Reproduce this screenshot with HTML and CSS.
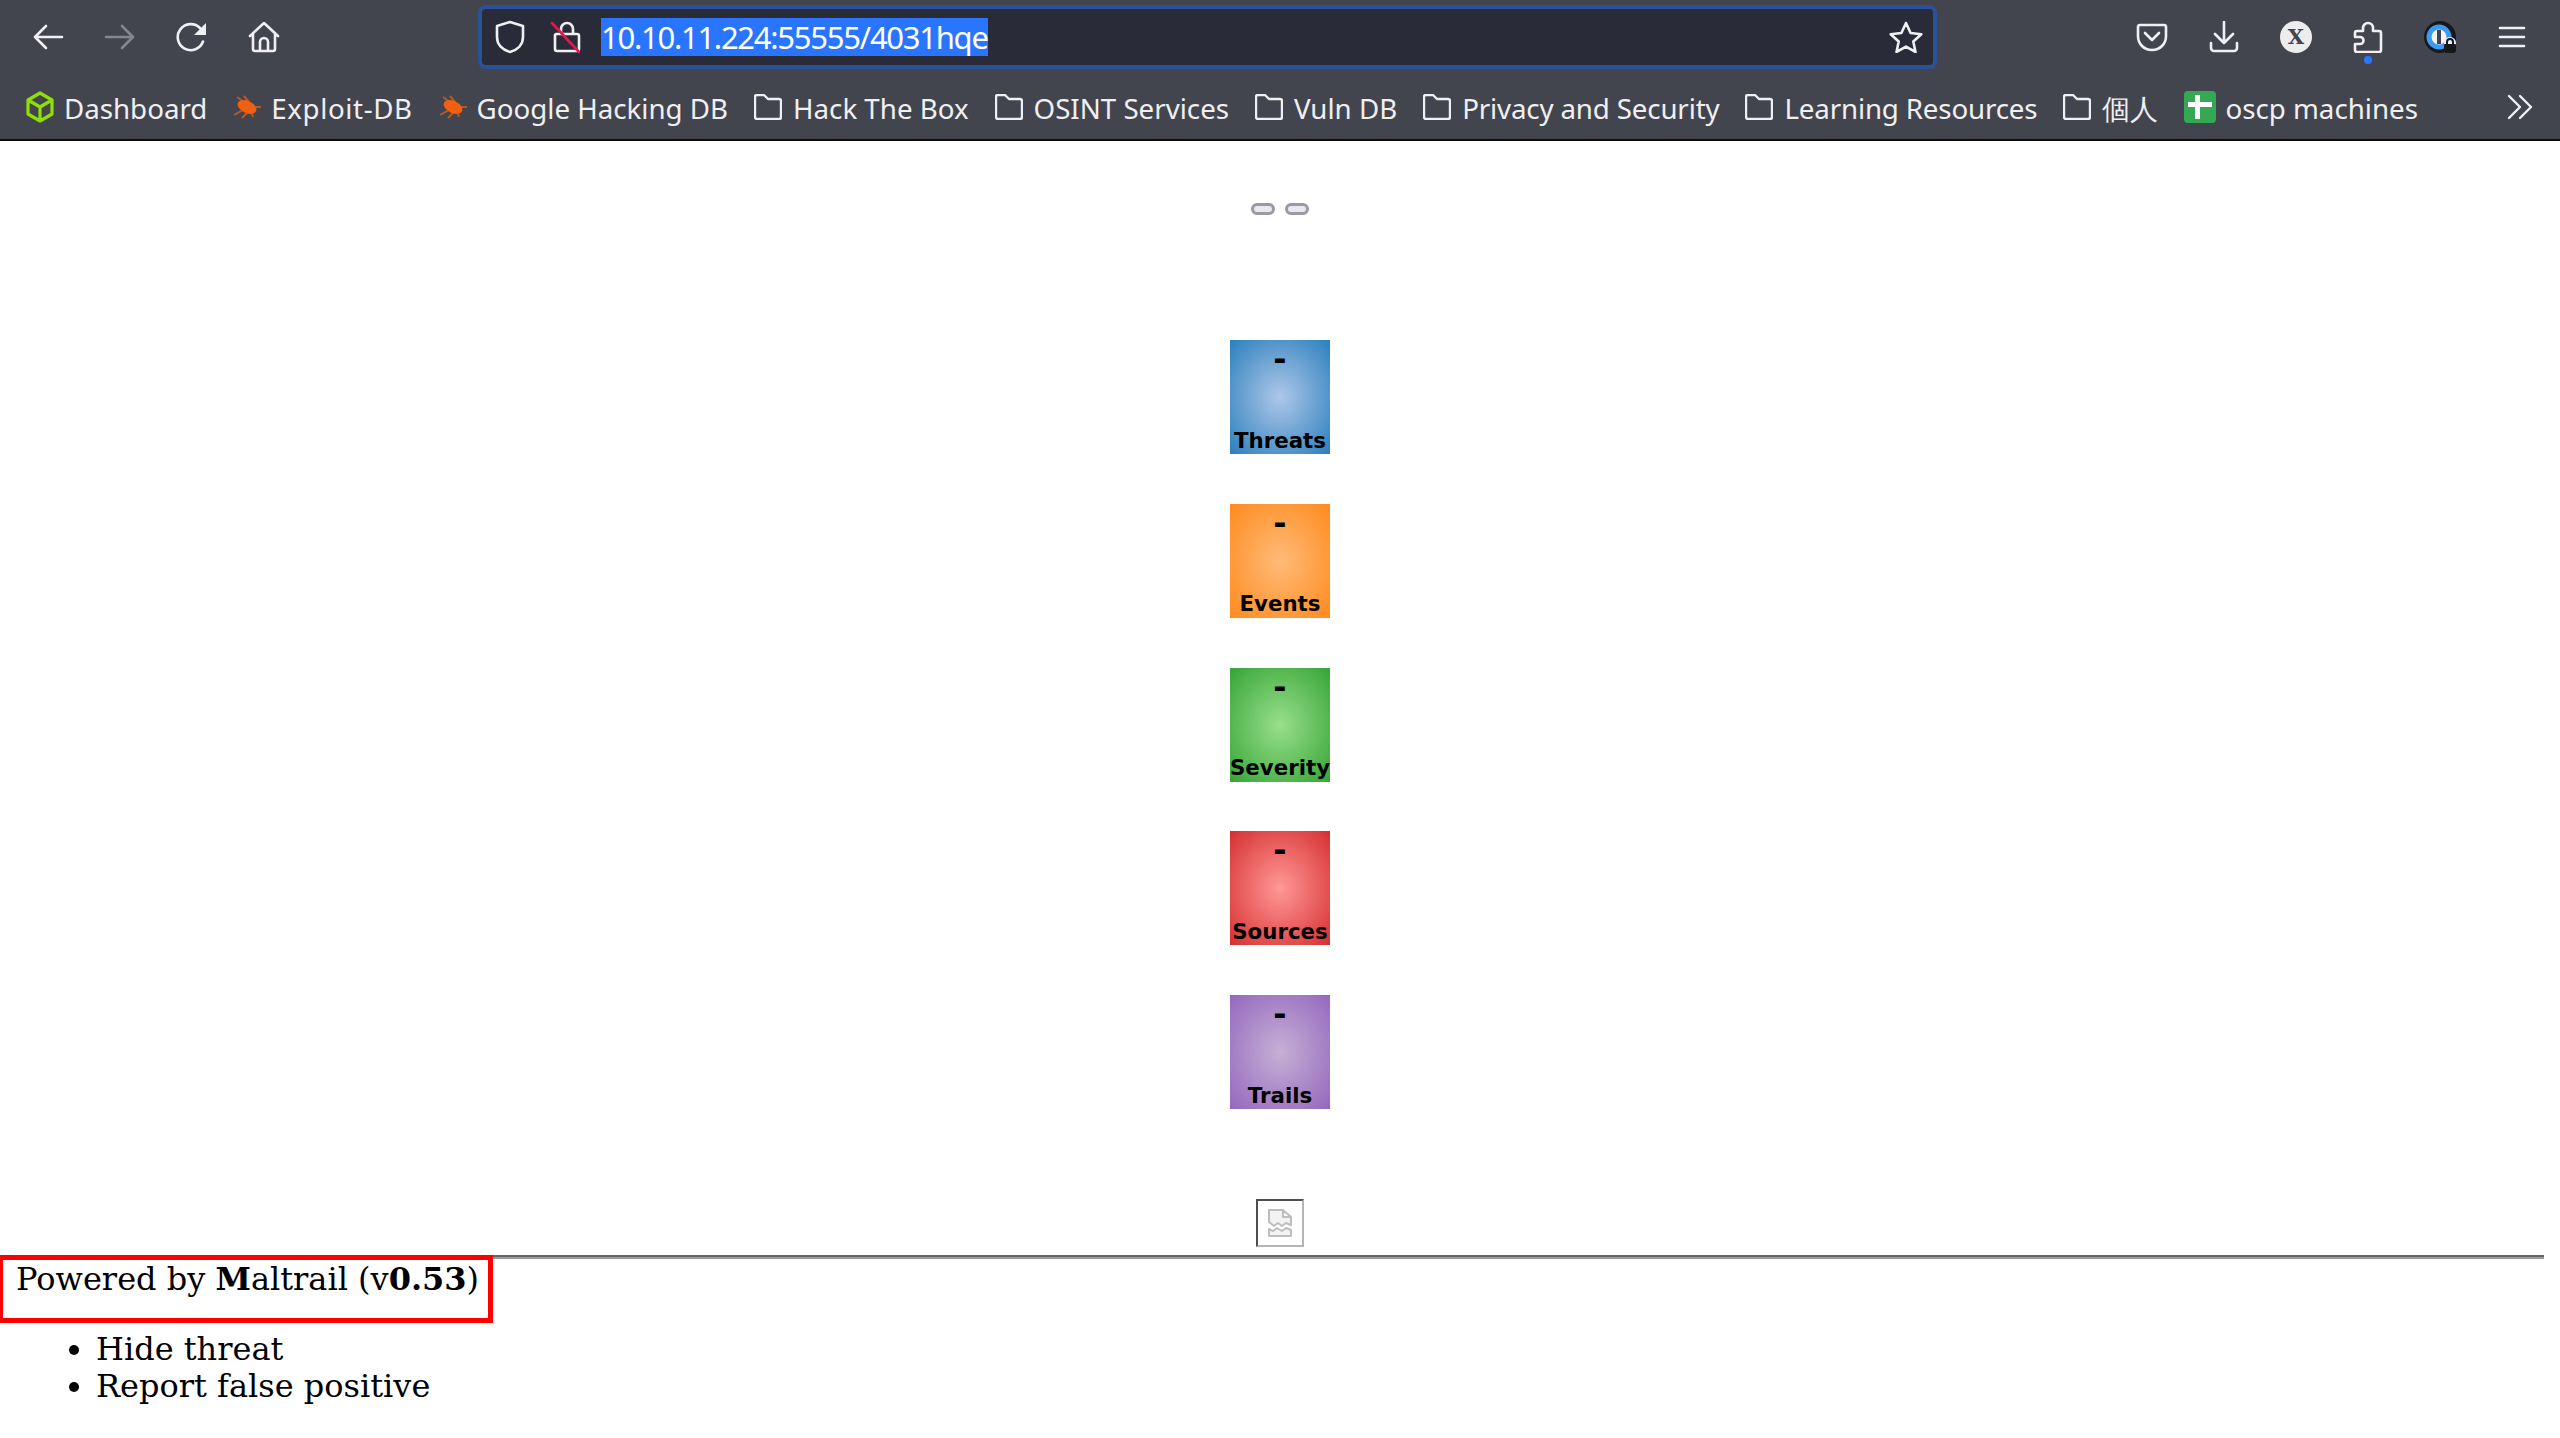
FILE: index.html
```html
<!DOCTYPE html>
<html lang="en">
<head>
<meta charset="utf-8">
<title>Maltrail</title>
<link rel="stylesheet" href="styles.css">
</head>
<body>
<header class="chrome">
  <div class="navrow">
    <div class="btn"><svg class="ic" viewBox="0 0 32 32"><path d="M30 16H3M14 5 3 16l11 11"/></svg></div>
    <div class="btn dim"><svg class="ic" viewBox="0 0 32 32"><path d="M2 16h27M18 5l11 11-11 11"/></svg></div>
    <div class="btn"><svg class="ic" viewBox="0 0 32 32"><path d="M27 20.5A13 13 0 1 1 24 7"/><path class="fill" d="M30 2v12H18z"/></svg></div>
    <div class="btn"><svg class="ic" viewBox="0 0 32 32"><path d="M2 15 16 2l14 13M5 13v15a2 2 0 0 0 2 2h18a2 2 0 0 0 2-2V13M12 30v-9a4 4 0 0 1 8 0v9"/></svg></div>
    <div class="urlbar">
      <svg class="ic shield" viewBox="0 0 32 34"><path d="M16 2 3 6v11c0 8 6 13 13 15 7-2 13-7 13-15V6z"/></svg>
      <svg class="ic lock" viewBox="0 0 32 34"><path d="M11 14V9a6 6 0 0 1 12 0v5M6 14h21a2 2 0 0 1 2 2v13a2 2 0 0 1-2 2H7a2 2 0 0 1-2-2V15z"/><path class="slash" d="M2 3l27 29"/></svg>
      <span class="url">10.10.11.224:55555/4031hqe</span>
      <svg class="ic star" viewBox="0 0 34 32"><path d="M17 2l4.6 10 10.7 1.2-8 7.3 2.2 10.5L17 25.6 7.500 31l2.200-10.500-8-7.300L12.400 12z"/></svg>
    </div>
    <div class="btn pushed"><svg class="ic" viewBox="0 0 32 32"><path d="M4 4h24a2 2 0 0 1 2 2v9c0 8-6 14-14 14S2 23 2 15V6a2 2 0 0 1 2-2z"/><path d="M9 12l7 7 7-7"/></svg></div>
    <div class="btn"><svg class="ic" viewBox="0 0 32 32"><path d="M16 1v21M7 13l9 9 9-9M3 22v5a3 3 0 0 0 3 3h20a3 3 0 0 0 3-3v-5"/></svg></div>
    <div class="btn"><span class="xbadge">X</span></div>
    <div class="btn puzzle"><svg class="ic" viewBox="0 0 32 32"><path d="M5 10h6V7a5 5 0 0 1 10 0v3h6a2 2 0 0 1 2 2v17a2 2 0 0 1-2 2H5a2 2 0 0 1-2-2v-6h5a3.500 3.500 0 0 0 0-7H3v-4a2 2 0 0 1 2-2z"/></svg><span class="dot"></span></div>
    <div class="btn"><svg class="op" viewBox="0 0 32 32"><circle class="op-b" cx="16" cy="16" r="16"/><circle class="op-r" cx="15" cy="16" r="10"/><rect class="op-k" x="13" y="9" width="4" height="14"/><path class="op-w" d="M20 32V22a6 6 0 0 1 12 0v10z"/><rect class="op-b" x="20" y="23" width="12" height="9" rx="1"/><path class="op-l" d="M23 24v-3a3 3 0 0 1 6 0v3"/></svg></div>
    <div class="btn"><svg class="ic" viewBox="0 0 32 32"><path d="M4 7h24M4 16h24M4 25h24"/></svg></div>
  </div>
  <nav class="bookmarks">
    <a class="bm bm-cube"><svg class="cube" viewBox="0 0 28 32"><path d="M14 2 26 9v14l-12 7-12-7V9zM2 9l12 7 12-7M14 16v14"/></svg><span>Dashboard</span></a>
    <a class="bm bm-bug bm-wide"><svg class="bug" viewBox="0 0 30 24"><path class="legs" d="M4 2l7 5M11 1l5 6M1 20l9-5M9 23l6-6M20 22l-2-6M28 12h-7"/><ellipse class="body" cx="14" cy="12" rx="10" ry="6" transform="rotate(25 14 12)"/></svg><span>Exploit-DB</span></a>
    <a class="bm bm-bug"><svg class="bug" viewBox="0 0 30 24"><path class="legs" d="M4 2l7 5M11 1l5 6M1 20l9-5M9 23l6-6M20 22l-2-6M28 12h-7"/><ellipse class="body" cx="14" cy="12" rx="10" ry="6" transform="rotate(25 14 12)"/></svg><span>Google Hacking DB</span></a>
    <a class="bm"><svg class="folder" viewBox="0 0 28 26"><path d="M3 1h7l4 4h11a2 2 0 0 1 2 2v16a2 2 0 0 1-2 2H3a2 2 0 0 1-2-2V3a2 2 0 0 1 2-2z"/></svg><span>Hack The Box</span></a>
    <a class="bm"><svg class="folder" viewBox="0 0 28 26"><path d="M3 1h7l4 4h11a2 2 0 0 1 2 2v16a2 2 0 0 1-2 2H3a2 2 0 0 1-2-2V3a2 2 0 0 1 2-2z"/></svg><span>OSINT Services</span></a>
    <a class="bm"><svg class="folder" viewBox="0 0 28 26"><path d="M3 1h7l4 4h11a2 2 0 0 1 2 2v16a2 2 0 0 1-2 2H3a2 2 0 0 1-2-2V3a2 2 0 0 1 2-2z"/></svg><span>Vuln DB</span></a>
    <a class="bm bm-narrow"><svg class="folder" viewBox="0 0 28 26"><path d="M3 1h7l4 4h11a2 2 0 0 1 2 2v16a2 2 0 0 1-2 2H3a2 2 0 0 1-2-2V3a2 2 0 0 1 2-2z"/></svg><span>Privacy and Security</span></a>
    <a class="bm bm-narrow"><svg class="folder" viewBox="0 0 28 26"><path d="M3 1h7l4 4h11a2 2 0 0 1 2 2v16a2 2 0 0 1-2 2H3a2 2 0 0 1-2-2V3a2 2 0 0 1 2-2z"/></svg><span>Learning Resources</span></a>
    <a class="bm"><svg class="folder" viewBox="0 0 28 26"><path d="M3 1h7l4 4h11a2 2 0 0 1 2 2v16a2 2 0 0 1-2 2H3a2 2 0 0 1-2-2V3a2 2 0 0 1 2-2z"/></svg><span>個人</span></a>
    <a class="bm bm-tight"><svg class="plus" viewBox="0 0 32 32"><rect class="plus-bg" width="32" height="32" rx="4"/><path class="plus-w" d="M4 11h7V4h5v7h12v5H16v12h-5V16H4z"/></svg><span>oscp machines</span></a>
    <svg class="ic more" viewBox="0 0 26 26"><path d="M2 2l11 11L2 24M13 2l11 11-11 11"/></svg>
  </nav>
</header>
<main class="page">
  <div class="pills"><span class="pill"></span><span class="pill"></span></div>
  <div class="tiles">
    <div class="tile blue"><b class="val">-</b><b class="lab">Threats</b></div>
    <div class="tile orange"><b class="val">-</b><b class="lab">Events</b></div>
    <div class="tile green"><b class="val">-</b><b class="lab">Severity</b></div>
    <div class="tile red"><b class="val">-</b><b class="lab">Sources</b></div>
    <div class="tile purple"><b class="val">-</b><b class="lab">Trails</b></div>
  </div>
  <div class="broken"><svg viewBox="0 0 26 30"><path class="br" d="M2 14V2h14l8 7v8l-5-2-4 3-4-3-4 3zM16 2v7h8"/><path class="br" d="M2 21l4 2 4-3 5 3 4-3 5 2v6H2z"/></svg></div>
  <hr class="rule">
  <div class="footer">
    <div class="powered">Powered by <b>M</b>altrail (v<b>0.53</b>)</div>
    <span class="redbox"></span>
    <ul class="menu"><li>Hide threat</li><li>Report false positive</li></ul>
  </div>
</main>
</body>
</html>
```
FILE: styles.css
```css
* { box-sizing: border-box; }
html, body { margin: 0; padding: 0; height: 100%; overflow: hidden; background: #fff; }
body { font-family: "DejaVu Serif", serif; font-size: 32px; line-height: 37.5px; color: #000; }

.chrome { height: 141px; background: #43454e; border-bottom: 2px solid #0c0c0d; color: #f0f0f2; font-family: "Noto Sans", sans-serif; }
.navrow { height: 74px; display: flex; align-items: center; padding: 0 12px; }
.btn { width: 72px; height: 64px; display: flex; align-items: center; justify-content: center; position: relative; flex: none; }
.ic { width: 32px; height: 32px; fill: none; stroke: #f0f0f2; stroke-width: 2.6; stroke-linecap: round; stroke-linejoin: round; }
.ic .fill { fill: #f0f0f2; stroke: none; }
.dim .ic { stroke: #84868c; }
.urlbar { width: 1459px; height: 64px; margin-left: 178px; flex: none; display: flex; align-items: center; background: #2a2b38; border: 4px solid #2b5199; border-radius: 8px; padding-left: 12px; }
.shield { width: 32px; height: 34px; }
.lock { width: 32px; height: 34px; margin-left: 24px; }
.lock .slash { stroke: #e6154b; }
.url { margin-left: 19px; height: 38px; line-height: 38px; background: #2a75ff; color: #fff; font-size: 31px; letter-spacing: -1.27px; white-space: nowrap; }
.star { width: 34px; height: 32px; margin-left: auto; margin-right: 10px; }
.pushed { margin-left: auto; }
.xbadge { width: 32px; height: 32px; border-radius: 50%; background: #ededee; color: #43454e; font: bold 21px/32px "DejaVu Serif", serif; text-align: center; }
.puzzle .dot { position: absolute; left: 32px; top: 51px; width: 8px; height: 8px; border-radius: 50%; background: #2a75ff; }
.op { width: 32px; height: 32px; }
.op-b { fill: #17181c; }
.op-r { fill: #f4f4f6; stroke: #3a9bf0; stroke-width: 5; }
.op-k { fill: #43454e; }
.op-w { fill: #f0f0f2; }
.op-l { fill: none; stroke: #17181c; stroke-width: 2; }

.bookmarks { height: 65px; display: flex; align-items: center; padding-left: 26px; font-size: 27.7px; position: relative; }
.bm { display: flex; align-items: center; gap: 11px; margin-right: 26px; white-space: nowrap; flex: none; }
.bm span { position: relative; top: 2px; }
.bm-cube { gap: 10px; }
.bm-bug { gap: 8px; }
.bm-tight { gap: 9px; }
.bm-wide { letter-spacing: 0.6px; }
.bm-narrow { letter-spacing: -0.15px; }
.cube { width: 28px; height: 32px; fill: none; stroke: #8fe000; stroke-width: 3.200; stroke-linejoin: round; }
.bug { width: 30px; height: 24px; filter: blur(.6px); }
.bug .body { fill: #f06010; }
.bug .legs { stroke: #b35a2a; stroke-width: 2; fill: none; }
.folder { width: 28px; height: 26px; fill: none; stroke: #f0f0f2; stroke-width: 2.400; stroke-linejoin: round; }
.plus { width: 32px; height: 32px; }
.plus-bg { fill: #34a853; }
.plus-w { fill: #fff; }
.more { width: 26px; height: 26px; position: absolute; left: 2507px; top: 20px; stroke-width: 2.400; }

.page { display: flex; flex-direction: column; align-items: center; padding-top: 62px; position: relative; }
.pills { display: flex; gap: 10px; height: 12px; }
.pill { width: 24px; height: 12px; border: 3px solid #9b98a8; border-radius: 6px; background: #e9e9ed; }
.tiles { margin-top: 125px; display: flex; flex-direction: column; gap: 49.75px; }
.tile { width: 100px; height: 114px; display: flex; flex-direction: column; align-items: center; justify-content: space-between; font-family: "DejaVu Sans", sans-serif; white-space: nowrap; }
.val { font-size: 32px; line-height: 36px; margin-top: 1px; }
.lab { font-size: 21.33px; line-height: 26px; margin-bottom: 0.5px; }
.blue { background: radial-gradient(ellipse at center, #aec7e8, #2a7fbd); }
.orange { background: radial-gradient(ellipse at center, #ffbb78, #ff8a1e); }
.green { background: radial-gradient(ellipse at center, #98df8a, #36a436); }
.red { background: radial-gradient(ellipse at center, #ff9896, #d62f30); }
.purple { background: radial-gradient(ellipse at center, #c5b0d5, #9467bd); }

.broken { width: 48px; height: 48px; margin-top: 90px; flex: none; border: 2px solid; border-color: #4d4d4d #b5b5b5 #b5b5b5 #4d4d4d; display: flex; align-items: center; justify-content: center; }
.broken svg { width: 26px; height: 30px; }
.br { fill: #f2f2f2; stroke: #bdbdbd; stroke-width: 2; stroke-linejoin: round; }
.rule { align-self: stretch; height: 4px; margin: 8px 16px 0; border: 0; border-top: 2px solid #666; border-bottom: 2px solid #999; }
.footer { align-self: stretch; padding: 2px 16px 0; position: relative; }
.redbox { position: absolute; left: -2px; top: -4px; width: 495px; height: 68px; border: 5px solid #f00; }
.menu { margin: 32px 0 0; padding: 0 0 0 80px; }
```
